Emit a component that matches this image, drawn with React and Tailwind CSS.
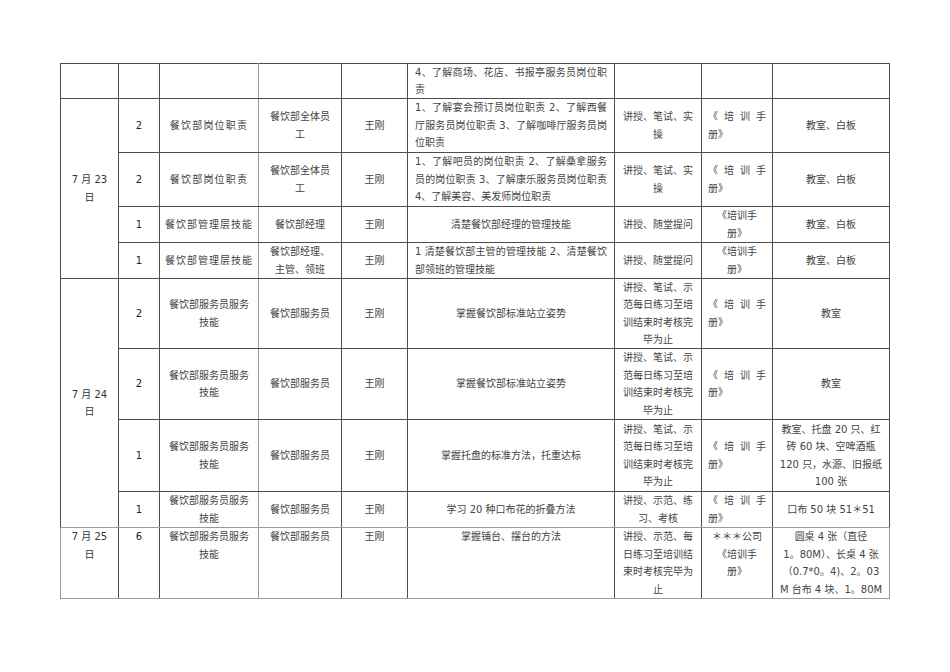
import clsx from "clsx";

const font = {
  fontFamily: '"DejaVu Sans", "Noto Sans CJK SC", sans-serif',
};

function Td({ className, children, ...rest }) {
  return (
    <td
      className={clsx(
        "border border-[#4d4d4d] px-[4px] py-0 text-center align-middle",
        className
      )}
      {...rest}
    >
      {children}
    </td>
  );
}

// full-width justified line
function J({ children }) {
  return (
    <div className="text-justify [text-align-last:justify]">{children}</div>
  );
}

function Manual() {
  return (
    <div className="px-[1px] text-left">
      <div className="flex justify-between">
        <span>《</span>
        <span>培</span>
        <span>训</span>
        <span>手</span>
      </div>
      <div>册》</div>
    </div>
  );
}

const method =
  ["讲授、笔试、示", "范每日练习至培", "训结束时考核完", "毕为止"];

function Lines({ lines, className }) {
  return (
    <div className={className}>
      {lines.map((l, i) => (
        <div key={i}>{l}</div>
      ))}
    </div>
  );
}

export default function App() {
  return (
    <div className="min-h-[672px] bg-white pt-[63px] pl-[60px]" style={font}>
      <table className="w-[829px] table-fixed border-collapse text-[10px] leading-[17.5px] text-[#444]">
        <colgroup>
          <col className="w-[58px]" />
          <col className="w-[41px]" />
          <col className="w-[99px]" />
          <col className="w-[83px]" />
          <col className="w-[66px]" />
          <col className="w-[207px]" />
          <col className="w-[87px]" />
          <col className="w-[71px]" />
          <col className="w-[117px]" />
        </colgroup>
        <tbody>
          <tr className="h-[35px]">
            <Td />
            <Td />
            <Td className="border-r-[#999]" />
            <Td className="border-l-[#999]" />
            <Td />
            <Td className="px-[7px] text-left align-top leading-[17px]">
              <J>4、了解商场、花店、书报亭服务员岗位职</J>
              <div>责</div>
            </Td>
            <Td />
            <Td />
            <Td />
          </tr>

          {/* 7月23日 */}
          <tr className="h-[54px]">
            <Td rowSpan={4} className="text-[#333]">
              7 月 23
              <br />日
            </Td>
            <Td className="text-[#222]">2</Td>
            <Td className="border-r-[#999] tracking-[1.2px]">餐饮部岗位职责</Td>
            <Td className="border-l-[#999]">
              餐饮部全体员
              <br />工
            </Td>
            <Td>王刚</Td>
            <Td className="px-[7px] text-left">
              <J>1、了解宴会预订员岗位职责 2、了解西餐</J>
              <J>厅服务员岗位职责 3、了解咖啡厅服务员岗</J>
              <div>位职责</div>
            </Td>
            <Td>
              讲授、笔试、实
              <br />操
            </Td>
            <Td className="px-[5px]">
              <Manual />
            </Td>
            <Td>教室、白板</Td>
          </tr>
          <tr className="h-[54px]">
            <Td className="text-[#222]">2</Td>
            <Td className="border-r-[#999] tracking-[1.2px]">餐饮部岗位职责</Td>
            <Td className="border-l-[#999]">
              餐饮部全体员
              <br />工
            </Td>
            <Td>王刚</Td>
            <Td className="px-[7px] text-left">
              <J>1、了解吧员的岗位职责 2、了解桑拿服务</J>
              <J>员的岗位职责 3、了解康乐服务员岗位职责</J>
              <div>4、了解美容、美发师岗位职责</div>
            </Td>
            <Td>
              讲授、笔试、实
              <br />操
            </Td>
            <Td className="px-[5px]">
              <Manual />
            </Td>
            <Td>教室、白板</Td>
          </tr>
          <tr className="h-[36px]">
            <Td className="text-[#222]">1</Td>
            <Td className="border-r-[#999] tracking-[1px]">餐饮部管理层技能</Td>
            <Td className="border-l-[#999]">餐饮部经理</Td>
            <Td>王刚</Td>
            <Td>清楚餐饮部经理的管理技能</Td>
            <Td>讲授、随堂提问</Td>
            <Td>
              《培训手
              <br />册》
            </Td>
            <Td>教室、白板</Td>
          </tr>
          <tr className="h-[36px]">
            <Td className="text-[#222]">1</Td>
            <Td className="border-r-[#999] tracking-[1px]">餐饮部管理层技能</Td>
            <Td className="border-l-[#999]">
              餐饮部经理、
              <br />
              主管、领班
            </Td>
            <Td>王刚</Td>
            <Td className="px-[7px] text-left">
              <J>1 清楚餐饮部主管的管理技能 2、清楚餐饮</J>
              <div>部领班的管理技能</div>
            </Td>
            <Td>讲授、随堂提问</Td>
            <Td>
              《培训手
              <br />册》
            </Td>
            <Td>教室、白板</Td>
          </tr>

          {/* 7月24日 */}
          <tr className="h-[70px]">
            <Td rowSpan={4} className="border-b-[#999] text-[#333]">
              7 月 24
              <br />日
            </Td>
            <Td className="text-[#222]">2</Td>
            <Td className="border-r-[#999]">
              餐饮部服务员服务
              <br />
              技能
            </Td>
            <Td className="border-l-[#999]">餐饮部服务员</Td>
            <Td>王刚</Td>
            <Td>掌握餐饮部标准站立姿势</Td>
            <Td>
              <Lines lines={method} className="leading-[17.2px]" />
            </Td>
            <Td className="px-[5px]">
              <Manual />
            </Td>
            <Td>教室</Td>
          </tr>
          <tr className="h-[71px]">
            <Td className="text-[#222]">2</Td>
            <Td className="border-r-[#999]">
              餐饮部服务员服务
              <br />
              技能
            </Td>
            <Td className="border-l-[#999]">餐饮部服务员</Td>
            <Td>王刚</Td>
            <Td>掌握餐饮部标准站立姿势</Td>
            <Td>
              <Lines lines={method} />
            </Td>
            <Td className="px-[5px]">
              <Manual />
            </Td>
            <Td>教室</Td>
          </tr>
          <tr className="h-[72px]">
            <Td className="text-[#222]">1</Td>
            <Td className="border-r-[#999]">
              餐饮部服务员服务
              <br />
              技能
            </Td>
            <Td className="border-l-[#999]">餐饮部服务员</Td>
            <Td>王刚</Td>
            <Td>掌握托盘的标准方法，托重达标</Td>
            <Td>
              <Lines lines={method} />
            </Td>
            <Td className="px-[5px]">
              <Manual />
            </Td>
            <Td className="px-[3px]">
              <Lines
                lines={[
                  "教室、托盘 20 只、红",
                  "砖 60 块、空啤酒瓶",
                  "120 只，水源、旧报纸",
                  "100 张",
                ]}
              />
            </Td>
          </tr>
          <tr className="h-[35px]">
            <Td className="border-b-[#999] text-[#222]">1</Td>
            <Td className="border-r-[#999] border-b-[#999]">
              餐饮部服务员服务
              <br />
              技能
            </Td>
            <Td className="border-l-[#999] border-b-[#999]">餐饮部服务员</Td>
            <Td className="border-b-[#999]">王刚</Td>
            <Td className="border-b-[#999]">学习 20 种口布花的折叠方法</Td>
            <Td className="border-b-[#999]">
              讲授、示范、练
              <br />
              习、考核
            </Td>
            <Td className="border-b-[#999] px-[5px]">
              <Manual />
            </Td>
            <Td className="border-b-[#999]">口布 50 块 51＊51</Td>
          </tr>

          {/* 7月25日 */}
          <tr className="h-[71px] align-top">
            <Td className="border-[#999] border-r-[#4d4d4d] align-top text-[#333]">
              7 月 25
              <br />日
            </Td>
            <Td className="border-b-[#999] border-t-[#999] align-top text-[#222]">6</Td>
            <Td className="border-r-[#999] border-b-[#999] border-t-[#999] align-top">
              餐饮部服务员服务
              <br />
              技能
            </Td>
            <Td className="border-l-[#999] border-b-[#999] border-t-[#999] align-top">
              餐饮部服务员
            </Td>
            <Td className="border-b-[#999] border-t-[#999] align-top">王刚</Td>
            <Td className="border-b-[#999] border-t-[#999] align-top">
              掌握铺台、摆台的方法
            </Td>
            <Td className="border-b-[#999] border-t-[#999] align-top">
              <Lines
                lines={["讲授、示范、每", "日练习至培训结", "束时考核完毕为", "止"]}
              />
            </Td>
            <Td className="border-b-[#999] border-t-[#999] align-top">
              ＊＊＊公司
              <br />
              《培训手
              <br />
              册》
            </Td>
            <Td className="border-b-[#999] border-t-[#999] border-r-[#999] px-[3px] align-top">
              <Lines
                lines={[
                  "圆桌 4 张（直径",
                  "1。80M）、长桌 4 张",
                  "（0.7*0。4)、2。03",
                  "M 台布 4 块、1。80M",
                ]}
              />
            </Td>
          </tr>
        </tbody>
      </table>
    </div>
  );
}
